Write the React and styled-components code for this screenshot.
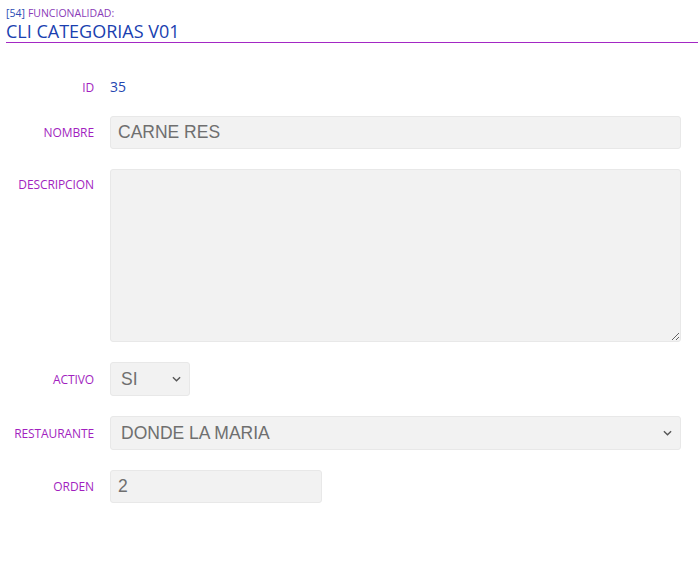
import React from "react";
import styled, { createGlobalStyle } from "styled-components";

const GlobalStyle = createGlobalStyle`
  body {
    margin: 0;
    background: #fff;
    font-family: "Open Sans", sans-serif;
  }
`;

const fields = [
  { label: "ID", kind: "text", value: "35" },
  { label: "NOMBRE", kind: "input", value: "CARNE RES" },
  { label: "DESCRIPCION", kind: "textarea", value: "" },
  { label: "ACTIVO", kind: "select", value: "SI", width: "80px" },
  { label: "RESTAURANTE", kind: "select", value: "DONDE LA MARIA" },
  { label: "ORDEN", kind: "input", value: "2", width: "212px" },
];

const App = () => {
  return (
    <Page>
      <GlobalStyle />
      <Header>
        <Caption>
          <Code>[54]</Code>
          <span>FUNCIONALIDAD:</span>
        </Caption>
        <Title>CLI CATEGORIAS V01</Title>
      </Header>

      <Form>
        {fields.map((f) => (
          <Row key={f.label} kind={f.kind}>
            <Label kind={f.kind}>{f.label}</Label>
            {f.kind === "text" && <Value>{f.value}</Value>}
            {f.kind === "input" && (
              <Input defaultValue={f.value} style={{ width: f.width }} />
            )}
            {f.kind === "textarea" && <TextArea defaultValue={f.value} />}
            {f.kind === "select" && (
              <SelectBox style={{ width: f.width }}>
                <span>{f.value}</span>
                <Chevron viewBox="0 0 10 6">
                  <path d="M1 1l4 4 4-4" />
                </Chevron>
              </SelectBox>
            )}
          </Row>
        ))}
      </Form>
    </Page>
  );
};

const Page = styled.div`
  width: 698px;
  height: 578px;
  background: #fff;
`;

const Header = styled.div`
  margin-left: 6px;
  padding-top: 6px;
  padding-bottom: 1px;
  border-bottom: 1.5px solid #a328c4;
`;

const Caption = styled.div`
  display: flex;
  gap: 3px;
  font-size: 10.5px;
  line-height: 15px;
  color: #8a3ab8;
`;

const Code = styled.span`
  color: #2c4cb4;
`;

const Title = styled.h1`
  margin: 0;
  font-size: 18px;
  line-height: 20px;
  font-weight: 400;
  color: #1a3fb0;
`;

const Form = styled.div`
  display: flex;
  flex-direction: column;
  gap: 20px;
  padding-top: 35px;
`;

const Row = styled.div`
  display: grid;
  grid-template-columns: 94px 1fr;
  column-gap: 16px;
  align-items: ${(p) => (p.kind === "textarea" ? "start" : "center")};
  padding-right: 17px;
`;

const Label = styled.div`
  text-align: right;
  font-size: 12px;
  color: #a21fc0;
  letter-spacing: -0.1px;
  padding-top: ${(p) => (p.kind === "textarea" ? "7px" : "0")};
`;

const Value = styled.div`
  font-size: 14px;
  color: #2445b0;
  line-height: 18px;
`;

const fieldBase = `
  box-sizing: border-box;
  background: #f2f2f2;
  border: 1px solid #e8e8e8;
  border-radius: 3px;
  font-family: "Liberation Sans", Arial, sans-serif;
  font-size: 17.5px;
  color: #6f6f6f;
`;

const Input = styled.input`
  ${fieldBase}
  width: 100%;
  height: 33px;
  padding: 0 7px;
  outline: none;
`;

const TextArea = styled.textarea`
  ${fieldBase}
  width: 100%;
  height: 173px;
  display: block;
  resize: vertical;
  outline: none;
`;

const SelectBox = styled.div`
  ${fieldBase}
  width: 100%;
  height: 34px;
  display: flex;
  align-items: center;
  justify-content: space-between;
  padding: 0 8px 0 10px;
`;

const Chevron = styled.svg`
  width: 9px;
  height: 6px;
  fill: none;
  stroke: #555;
  stroke-width: 1.5;
`;

export default App;
